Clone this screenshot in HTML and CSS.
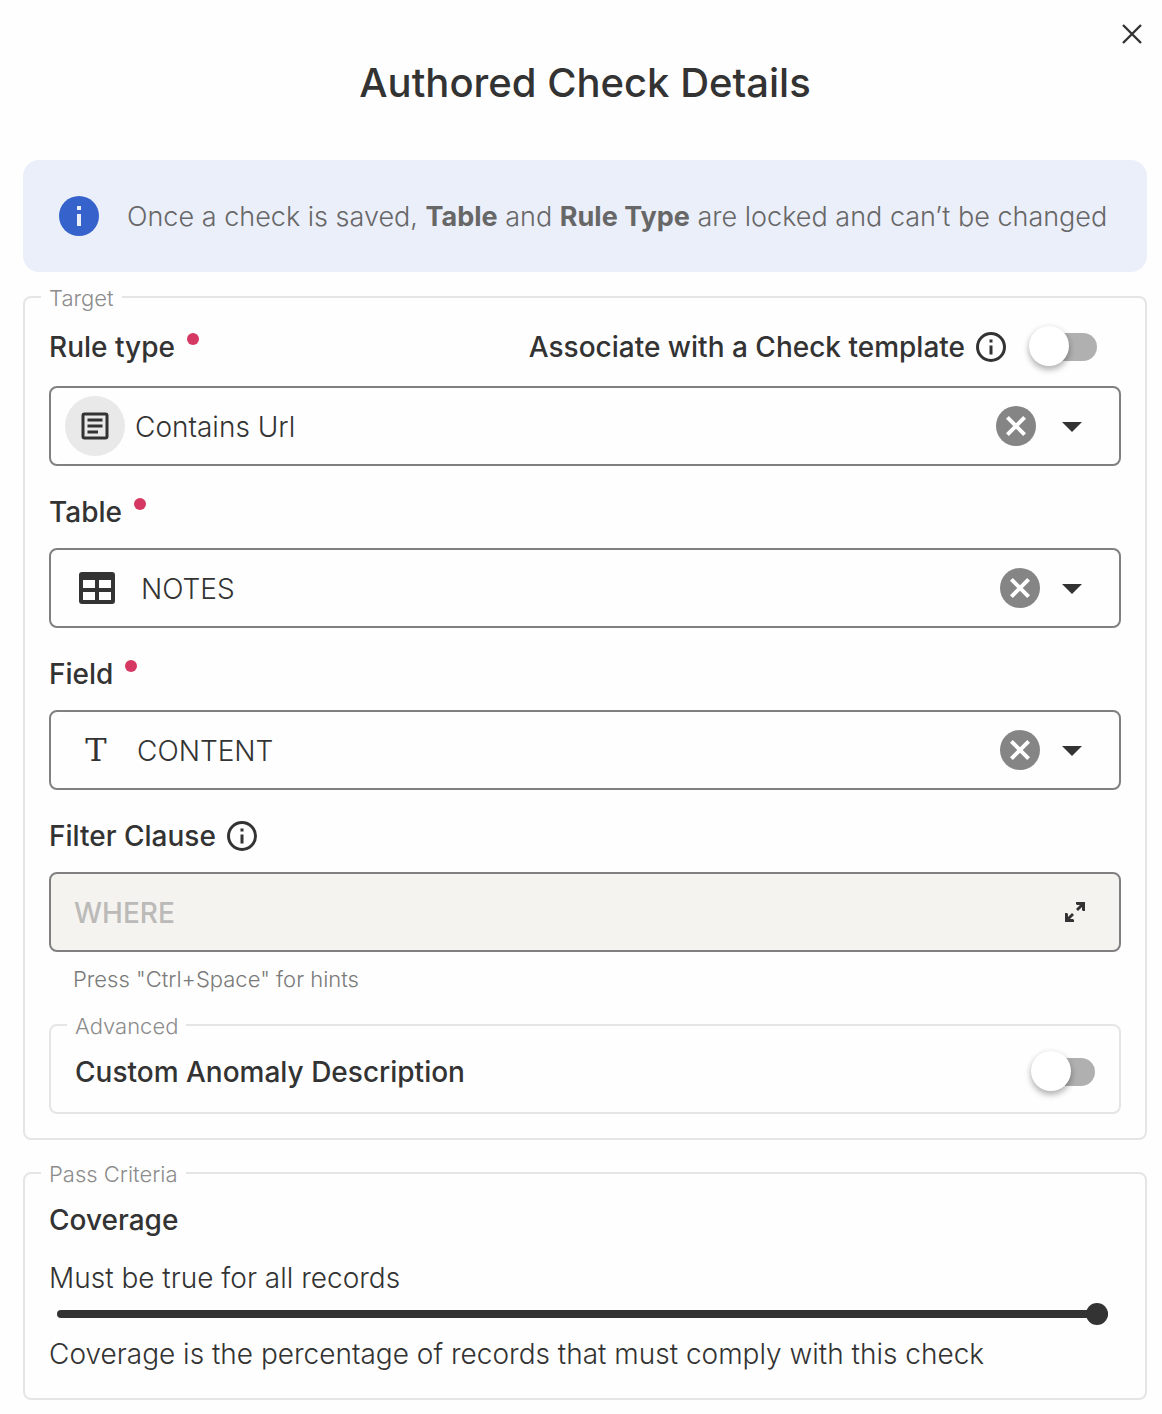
FILE: index.html
```html
<!DOCTYPE html>
<html lang="en">
  <head>
    <meta charset="UTF-8" />
    <meta name="viewport" content="width=device-width, initial-scale=1.0" />
    <title>Authored Check Details</title>
    <link rel="stylesheet" href="styles.css">
  </head>
  <body>

    <header class="dialog-header">
      <button class="icon-btn close-btn" type="button" aria-label="Close">
        <svg width="24" height="24" viewBox="0 0 24 24"><path d="M3 3L21 21M21 3L3 21" fill="none" stroke="currentColor" stroke-width="2.4"/></svg>
      </button>
      <h1>Authored Check Details</h1>
    </header>

    <form class="dialog-body">
      <div class="banner">
        <svg class="banner-icon" width="48" height="48" viewBox="0 0 24 24"><circle cx="12" cy="12" r="10" fill="#3562cb"/><path d="M11 7h2v2h-2zM11 11h2v6h-2z" fill="#ebeffa"/></svg>
        <p>Once a check is saved, <b>Table</b> and <b>Rule Type</b> are locked and can’t be changed</p>
      </div>

      <fieldset class="group">
        <legend>Target</legend>

        <div class="label-row first">
          <label class="required" for="ruleType">Rule type</label>
          <div class="template">
            <label for="template">Associate with a Check template</label>
            <svg class="info" width="36" height="36" viewBox="0 0 24 24"><path d="M11 9h2V7h-2m1 13c-4.410 0-8-3.590-8-8s3.590-8 8-8 8 3.590 8 8-3.590 8-8 8m0-18A10 10 0 0 0 2 12a10 10 0 0 0 10 10 10 10 0 0 0 10-10A10 10 0 0 0 12 2m-1 15h2v-6h-2v6z" fill="currentColor"/></svg>
            <input class="switch wide" type="checkbox" id="template" />
          </div>
        </div>
        <div class="control rule-control">
          <span class="avatar">
            <svg width="36" height="36" viewBox="0 0 24 24"><path d="M5 3h14a2 2 0 0 1 2 2v14a2 2 0 0 1-2 2H5a2 2 0 0 1-2-2V5a2 2 0 0 1 2-2m0 2v14h14V5H5m2 2h10v2H7V7m0 4h10v2H7v-2m0 4h7v2H7v-2z" fill="currentColor" fill-rule="evenodd"/></svg>
          </span>
          <select id="ruleType"><option>Contains Url</option></select>
          <button class="icon-btn clear" type="button" aria-label="Clear rule type">
            <svg width="48" height="48" viewBox="0 0 24 24"><circle cx="12" cy="12" r="10" fill="#858585"/><path d="M7.700 7.700l8.600 8.600M16.300 7.700l-8.600 8.600" stroke="#fff" stroke-width="2"/></svg>
          </button>
          <svg class="caret" width="48" height="48" viewBox="0 0 24 24"><path d="M7 10l5 5 5-5H7z" fill="currentColor"/></svg>
        </div>

        <div class="label-row">
          <label class="required" for="table">Table</label>
        </div>
        <div class="control table-control">
          <svg class="table-icon" width="40" height="40" viewBox="0 0 40 40"><path d="M5 4h30a3 3 0 0 1 3 3v26a3 3 0 0 1-3 3H5a3 3 0 0 1-3-3V7a3 3 0 0 1 3-3m1 8v8h12v-8H6m16 0v8h12v-8H22M6 24v8h12v-8H6m16 0v8h12v-8H22z" fill="currentColor" fill-rule="evenodd"/></svg>
          <select id="table"><option>NOTES</option></select>
          <button class="icon-btn clear" type="button" aria-label="Clear table">
            <svg width="48" height="48" viewBox="0 0 24 24"><circle cx="12" cy="12" r="10" fill="#858585"/><path d="M7.700 7.700l8.600 8.600M16.300 7.700l-8.600 8.600" stroke="#fff" stroke-width="2"/></svg>
          </button>
          <svg class="caret" width="48" height="48" viewBox="0 0 24 24"><path d="M7 10l5 5 5-5H7z" fill="currentColor"/></svg>
        </div>

        <div class="label-row">
          <label class="required" for="field">Field</label>
        </div>
        <div class="control field-control">
          <span class="type-icon" aria-hidden="true">T</span>
          <select id="field"><option>CONTENT</option></select>
          <button class="icon-btn clear" type="button" aria-label="Clear field">
            <svg width="48" height="48" viewBox="0 0 24 24"><circle cx="12" cy="12" r="10" fill="#858585"/><path d="M7.700 7.700l8.600 8.600M16.300 7.700l-8.600 8.600" stroke="#fff" stroke-width="2"/></svg>
          </button>
          <svg class="caret" width="48" height="48" viewBox="0 0 24 24"><path d="M7 10l5 5 5-5H7z" fill="currentColor"/></svg>
        </div>

        <div class="label-row">
          <label for="filter">Filter Clause</label>
          <svg class="info" width="36" height="36" viewBox="0 0 24 24"><path d="M11 9h2V7h-2m1 13c-4.410 0-8-3.590-8-8s3.590-8 8-8 8 3.590 8 8-3.590 8-8 8m0-18A10 10 0 0 0 2 12a10 10 0 0 0 10 10 10 10 0 0 0 10-10A10 10 0 0 0 12 2m-1 15h2v-6h-2v6z" fill="currentColor"/></svg>
        </div>
        <div class="control filter-control">
          <input type="text" id="filter" placeholder="WHERE" />
          <button class="icon-btn" type="button" aria-label="Expand editor">
            <svg width="22" height="22" viewBox="0 0 22 22"><path d="M12 1h9v9h-2l-1-1V6l-4 4-2-2 4-4h-3l-1-1V1zM10 21H1v-9h2l1 1v3l4-4 2 2-4 4h3l1 1v2z" fill="currentColor"/></svg>
          </button>
        </div>
        <p class="hint">Press "Ctrl+Space" for hints</p>

        <fieldset class="group advanced">
          <legend>Advanced</legend>
          <div class="option-row">
            <label for="custom">Custom Anomaly Description</label>
            <input class="switch" type="checkbox" id="custom" />
          </div>
        </fieldset>
      </fieldset>

      <fieldset class="group pass">
        <legend>Pass Criteria</legend>
        <h2>Coverage</h2>
        <label class="range-label" for="coverage">Must be true for all records</label>
        <input class="slider" type="range" id="coverage" min="0" max="100" value="100" />
        <p>Coverage is the percentage of records that must comply with this check</p>
      </fieldset>
    </form>

  </body>
</html>
```

FILE: styles.css
```css
* {
    box-sizing: border-box;
}

body {
    margin: 0;
    background: #fefefe;
    color: #333;
    font-family: Inter, "Open Sans", sans-serif;
    font-size: 28px;
    font-weight: 300;
    line-height: 36px;
}

h1, h2, p {
    margin: 0;
}

svg {
    display: block;
    flex: none;
}

button, input, select {
    font: inherit;
    color: inherit;
}

.icon-btn {
    display: flex;
    flex: none;
    padding: 0;
    border: none;
    background: none;
    cursor: pointer;
}

.dialog-header {
    display: flex;
    flex-direction: column;
    padding: 22px 15px 0 23px;
}

.dialog-header h1 {
    margin-top: 12px;
    font-size: 40px;
    font-weight: 500;
    line-height: 50px;
    text-align: center;
}

.close-btn {
    align-self: flex-end;
    margin-right: 3px;
}

.dialog-body {
    padding: 52px 15px 14px 23px;
}

.banner {
    display: flex;
    align-items: center;
    gap: 24px;
    min-height: 112px;
    padding: 0 32px;
    margin-bottom: 12px;
    border-radius: 16px;
    background: #ebeffa;
    color: #676767;
    font-size: 27px;
}

.banner p {
    padding-top: 2px;
}

.banner b {
    font-weight: 700;
}

/* groups */
.group {
    min-width: 0;
    margin: 0;
    padding: 0 24px 24px;
    border: 2px solid #e5e5e5;
    border-radius: 8px;
}

.group legend {
    margin-left: -8px;
    padding: 2px 8px 0;
    color: #8c8c8c;
    font-size: 22px;
    line-height: 24px;
}

.label-row {
    display: flex;
    align-items: center;
    gap: 8px;
    min-height: 82px;
    padding: 28px 0 18px;
    font-weight: 500;
}

.label-row.first {
    justify-content: space-between;
    min-height: 76px;
    padding: 18px 24px 20px 0;
}

.required::after {
    content: "";
    display: inline-block;
    width: 12px;
    height: 12px;
    margin-left: 12px;
    border-radius: 50%;
    background: #d63864;
    vertical-align: 12px;
}

.template {
    display: flex;
    align-items: center;
}

.template .info {
    margin: 0 20px 0 8px;
}

/* select and text boxes */
.control {
    display: flex;
    align-items: center;
    height: 80px;
    padding: 0 23px 0 28px;
    border: 2px solid #808080;
    border-radius: 8px;
}

.control select,
.control input {
    flex: 1;
    min-width: 0;
    height: 48px;
    padding: 2px 0 0;
    border: none;
    outline: none;
    background: none;
    appearance: none;
}

.control .clear {
    margin-right: 4px;
}

.control.rule-control {
    padding-left: 14px;
}

.rule-control .clear {
    margin-right: 8px;
}

.avatar {
    display: flex;
    align-items: center;
    justify-content: center;
    width: 60px;
    height: 60px;
    margin-right: 10px;
    border-radius: 50%;
    background: #e9e9e9;
}

.table-control {
    padding-left: 26px;
}

.table-icon {
    margin-right: 24px;
}

.type-icon {
    width: 34px;
    margin-right: 24px;
    font-family: "DejaVu Serif", serif;
    font-size: 32px;
    font-weight: 400;
    text-align: center;
}

.filter-control {
    padding: 0 33px 0 23px;
    background: #f4f3ef;
}

.filter-control input::placeholder {
    color: #bbbab8;
    font-weight: 500;
    opacity: 1;
}

.hint {
    padding: 13px 24px 19px;
    color: #7a7a7a;
    font-size: 22px;
    line-height: 28px;
}

/* switches */
.switch {
    position: relative;
    flex: none;
    width: 64px;
    height: 28px;
    margin: 0;
    border-radius: 14px;
    background: linear-gradient(90deg, transparent 20px, #b0b0b0 20px);
    appearance: none;
    cursor: pointer;
}

.switch.wide {
    width: 68px;
}

.switch::before {
    content: "";
    position: absolute;
    top: -7px;
    left: 0;
    width: 40px;
    height: 40px;
    border-radius: 50%;
    background: white;
    box-shadow: 0 4px 6px rgba(0, 0, 0, 0.25), 0 1px 6px rgba(0, 0, 0, 0.1);
}

.switch:checked::before {
    left: auto;
    right: 0;
}

.option-row {
    display: flex;
    align-items: center;
    justify-content: space-between;
    padding: 16px 0 22px;
    font-weight: 500;
}

.advanced {
    padding-bottom: 0;
}

/* pass criteria */
.pass {
    margin-top: 20px;
    padding-bottom: 26px;
}

.pass h2 {
    padding: 16px 0 22px;
    font-size: 28px;
    font-weight: 500;
}

.range-label {
    display: block;
}

.slider {
    display: block;
    width: calc(100% - 21px);
    height: 22px;
    margin: 7px 13px 11px 8px;
    background: none;
    appearance: none;
}

.slider::-webkit-slider-runnable-track {
    height: 8px;
    border-radius: 4px;
    background: #333;
}

.slider::-webkit-slider-thumb {
    width: 22px;
    height: 22px;
    margin-top: -7px;
    border-radius: 50%;
    background: #333;
    appearance: none;
}
```
